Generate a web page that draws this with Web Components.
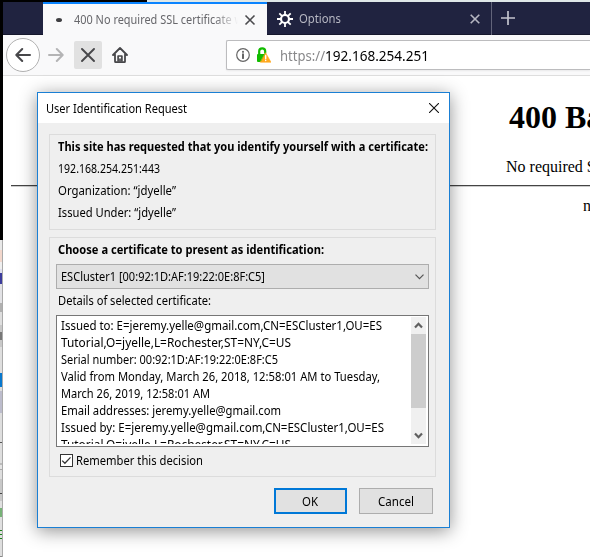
<!DOCTYPE html>
<html lang="en"><head><meta charset="utf-8"><title>400 No required SSL certificate was sent</title>
<style>
html,body{margin:0;width:590px;height:557px;overflow:hidden;background:#fff}
body{font:12px "Noto Sans","Open Sans",sans-serif;color:#000}
</style></head><body>
<desktop-view></desktop-view>
<script>
const def=(name,html,init)=>customElements.define(name,class extends HTMLElement{
  connectedCallback(){
    if(this.shadowRoot)return;
    const t=document.createElement('template');t.innerHTML=html;
    this.attachShadow({mode:'open'}).append(t.content.cloneNode(true));
    if(init)init(this,this.shadowRoot);
  }
});

// A single line of text condensed to the width given in its "w" attribute.
def('fit-text',`<style>:host{display:block;white-space:nowrap;height:17px;line-height:17px}
span{display:inline-block;transform-origin:0 50%}</style><span><slot></slot></span>`,(h,r)=>{
  const s=r.querySelector('span'),w=+h.getAttribute('w');
  h.style.width=w+'px';
  const n=s.getBoundingClientRect().width;
  if(n)s.style.transform='scaleX('+(w/n)+')';
});

def('tab-strip',`<style>
:host{display:flex;height:33px;background:#202340;box-sizing:border-box;color:#b6b7c2;border-bottom:1px solid #15172c}
.gap{width:40px;flex:none}
.tab{display:flex;align-items:center;height:33px;box-sizing:border-box}
.on{width:224px;background:#f9f9fa;border-top:2px solid #0a84ff;color:#67676b;padding-left:13px;height:34px;padding-bottom:1px}
.dot{width:6px;height:4px;border-radius:50%;background:#3f3f42;margin-right:12px}
.title{width:164px;overflow:hidden;-webkit-mask:linear-gradient(90deg,#000 140px,transparent 164px);mask:linear-gradient(90deg,#000 140px,transparent 164px)}
.off{width:225px;padding-left:10px;border-right:1px solid #62647a}
svg{display:block;flex:none}
</style>
<div class="gap"></div>
<div class="tab on"><div class="dot"></div><div class="title"><fit-text w="169">400 No required SSL certificate w</fit-text></div>
<svg width="12" height="12" viewBox="0 0 12 12" style="margin-left:6px"><path d="M1.5 1.5l9 9m0-9l-9 9" stroke="#4b4b4e" stroke-width="1.6"/></svg></div>
<div class="tab off"><svg width="16" height="16" viewBox="0 0 16 16" fill="none" stroke="#fff"><circle cx="8" cy="8" r="4" stroke-width="2.2"/><path d="M8 0v4M8 12v4M0 8h4M12 8h4M2.3 2.3l2.9 2.9M10.8 10.8l2.9 2.9M13.7 2.3l-2.9 2.9M5.2 10.8l-2.9 2.9" stroke-width="1.8"/></svg>
<fit-text w="42" style="margin-left:6px">Options</fit-text>
<svg width="10" height="10" viewBox="0 0 10 10" style="margin-left:129px"><path d="M.7.7l8.6 8.6m0-8.6L.7 9.3" stroke="#b6b7c2" stroke-width="1.6"/></svg></div>
<svg width="14" height="14" viewBox="0 0 14 14" style="margin:9px 0 0 9px"><path d="M7 0v14M0 7h14" stroke="#c3c4cd" stroke-width="1.7"/></svg>`);

def('nav-bar',`<style>
:host{display:flex;height:41px;box-sizing:border-box;background:#f9f9fa;border-bottom:1px solid #dedede;align-items:center;padding:0 0 1px 3px}
.back{width:34px;height:34px;box-sizing:border-box;border:1px solid #b1b1b1;border-radius:50%;background:#fff;display:grid;place-items:center;flex:none}
svg{display:block;fill:none;stroke-linecap:round;stroke-linejoin:round;flex:none}
.stop{width:28px;height:28px;background:#e1e1e1;border-radius:2px;display:grid;place-items:center;margin:0 10px;flex:none}
.url{display:flex;align-items:center;margin-left:98px;height:30px;box-sizing:border-box;border:1px solid #bcbcbe;border-right:0;border-radius:2px 0 0 2px;background:#fff;flex:1;padding-left:9px;font-size:15px;box-shadow:0 1px 2px #0001}
.url fit-text{position:relative;top:1px}
.s{color:#88888a}
</style>
<div class="back"><svg width="16" height="16" viewBox="0 0 16 16" stroke="#47474a" stroke-width="2"><path d="M15 8H1.5M7.2 2L1.3 8l5.9 6"/></svg></div>
<svg width="16" height="16" viewBox="0 0 16 16" stroke="#b4b4b5" stroke-width="2" style="margin-left:8px"><path d="M1 8h13.5M8.8 2l5.9 6-5.9 6"/></svg>
<div class="stop"><svg width="14" height="14" viewBox="0 0 14 14" stroke="#47474a" stroke-width="1.9"><path d="M1 1l12 12M13 1L1 13"/></svg></div>
<svg width="16" height="16" viewBox="0 0 16 16" stroke="#47474a" stroke-width="1.8"><path d="M1 8l7-7 7 7M3 7.5V14.5a.6.6 0 0 0 .6.6h8.8a.6.6 0 0 0 .6-.6V7.5"/><path d="M6.1 14V9h3.8v5M8 12v2" stroke-width="1.7"/></svg>
<div class="url"><svg width="14" height="14" viewBox="0 0 14 14" stroke="#666"><circle cx="7" cy="7" r="6.3" stroke-width="1.2"/><path d="M7 6.2v4M7 3.7v.2" stroke="#555" stroke-width="1.8"/></svg>
<svg width="15" height="16" viewBox="0 0 15 16" style="margin-left:6px"><path d="M3.2 8V4.3a3 3 0 0 1 6 0V6" stroke="#12bc00" stroke-width="2.2"/><rect x="1" y="7" width="9" height="8" rx="1" fill="#12bc00"/><path d="M9.7 6L15 15.2H4.5z" fill="#ffa91e" stroke="#ffa91e" stroke-width=".6"/><path d="M9.7 8.5v3M9.7 13.3v.2" stroke="#fff" stroke-width="1.4"/></svg>
<fit-text class="s" w="45" style="margin-left:9px">https://</fit-text><fit-text w="104">192.168.254.251</fit-text></div>`);

def('error-page',`<style>
:host{display:block;flex:1;overflow:hidden;background:#fff;font:16px "Liberation Serif",serif;padding-left:8px}
h1{font-size:32px;line-height:37px;margin:23px 0 0 498px;white-space:nowrap}
p{margin:22px 0 0 495px;line-height:18px;white-space:nowrap}
hr{border:0;border-top:1px solid #444;border-bottom:1px solid #ccc;margin:9px 0 0}
p.n{margin:10px 0 0 572px}
</style><h1>400 Bad Request</h1><p>No required SSL certificate was sent</p><hr><p class="n">nginx</p>`);

// Slice of the window lying behind the browser's left edge.
def('back-sliver',`<style>:host{display:flex;flex-direction:column;width:3px;height:557px;flex:none;overflow:hidden;box-sizing:border-box;border-right:1px solid #aaa}
i{display:block;flex:none}</style>
<slot></slot>`,(h,r)=>{
  [[240,'#000'],[10,'#e8e8e8'],[12,'#f2d7cc'],[7,'#efefef'],[4,'#e0e0ef'],[11,'#3c3c9c'],[19,'#e2e2e5'],[9,'#b0b0b0'],[13,'#dedede'],[7,'#c8c8c8'],[8,'#777'],[7,'#c8c8c8'],[26,'#dedede'],[14,'#0878ce'],[4,'#ddd'],[22,'#bcbccc'],[29,'#dedede'],[1,'#555'],[20,'#dedede'],[2,'#bbb'],[4,'#e4e4e4'],[1,'#aaa'],[9,'#dedede'],[14,'#c8c8c8'],[1,'#444'],[7,'#c8c8c8'],[7,'#e0e0e0'],[9,'#77b277'],[13,'#e0e0e0'],[1,'#188018'],[3,'#e0e0e0'],[1,'#188018'],[3,'#e0e0e0'],[1,'#188018'],[17,'#dedede'],[10,'#888']]
  .forEach(([y,c])=>{const i=document.createElement('i');i.style.cssText='height:'+y+'px;background:'+c;r.append(i)});
  h.style.borderImage='linear-gradient(#000 240px,#aaa 240px) 1';
});

def('group-box',`<style>:host{display:block;box-sizing:border-box;border:1px solid #dcdcdc;margin:0 13px 0 11px}</style><slot></slot>`);

def('push-button',`<style>:host{display:grid;place-items:center;box-sizing:border-box;width:74px;height:26px;background:#e1e1e1;border:1px solid #adadad}
:host([default]){width:73px;border:2px solid #0078d7;padding-right:1px}</style><slot></slot>`);

def('scroll-bar',`<style>:host{display:flex;flex-direction:column;width:15px;height:127px;background:#f0f0f0;flex:none}
.b{height:17px;display:grid;place-items:center}.t{height:74px;background:#cdcdcd}.f{flex:1}svg{display:block}</style>
<div class="b"><svg width="9" height="7" viewBox="0 0 9 7"><path d="M1 5.5l3.5-3.7L8 5.5" fill="none" stroke="#606060" stroke-width="2.2"/></svg></div>
<div class="t"></div><div class="f"></div>
<div class="b"><svg width="9" height="7" viewBox="0 0 9 7"><path d="M1 1.5l3.5 3.7L8 1.5" fill="none" stroke="#606060" stroke-width="2.2"/></svg></div>`);

def('cert-dialog',`<style>
:host{display:block;box-sizing:border-box;width:413px;height:436px;border:1px solid #1a7fd4;background:#efefef;box-shadow:0 3px 17px rgba(0,0,0,.43)}
header{display:flex;justify-content:space-between;align-items:center;height:30px;background:#fff;padding:0 10px 0 8px}
svg{display:block}
b{font-weight:700}
.g1{height:96px;margin-top:11px;padding:3px 0 0 8px}
.g1 fit-text{margin-bottom:5px}
.g2{height:240px;margin-top:7px;padding:3px 6px 0}
.sel{display:flex;align-items:center;justify-content:space-between;height:25px;box-sizing:border-box;border:1px solid #adadad;background:#e1e1e1;margin:6px 0 3px;padding:0 4px}
.area{display:flex;justify-content:space-between;height:132px;box-sizing:border-box;border:1px solid #767676;background:#fff;margin-top:6px;padding:1px 2px 2px 4px}
.lines{height:127px;overflow:hidden}
.chk{display:flex;align-items:center;margin:5px 0 0 4px;gap:3px}
.box{width:13px;height:13px;box-sizing:border-box;border:1px solid #333;background:#fff}
footer{display:flex;justify-content:flex-end;gap:12px;padding:11px 16px 0 0}
</style>
<header><fit-text w="141">User Identification Request</fit-text><svg width="10" height="10" viewBox="0 0 10 10"><path d="M0 0l10 10M10 0L0 10" stroke="#111" stroke-width="1.1"/></svg></header>
<group-box class="g1"><fit-text w="370"><b>This site has requested that you identify yourself with a certificate:</b></fit-text>
<fit-text w="102">192.168.254.251:443</fit-text><fit-text w="118">Organization: “jdyelle”</fit-text><fit-text w="118">Issued Under: “jdyelle”</fit-text></group-box>
<group-box class="g2"><fit-text w="266" style="margin-left:2px"><b>Choose a certificate to present as identification:</b></fit-text>
<div class="sel"><fit-text w="204">ESCluster1 [00:92:1D:AF:19:22:0E:8F:C5]</fit-text><svg width="9" height="6" viewBox="0 0 9 6"><path d="M.5.7l4 4 4-4" fill="none" stroke="#555" stroke-width="1.2"/></svg></div>
<fit-text w="153" style="margin-left:2px">Details of selected certificate:</fit-text>
<div class="area"><div class="lines">
<fit-text w="321">Issued to: E=jeremy.yelle@gmail.com,CN=ESCluster1,OU=ES</fit-text>
<fit-text w="230">Tutorial,O=jyelle,L=Rochester,ST=NY,C=US</fit-text>
<fit-text w="217">Serial number: 00:92:1D:AF:19:22:0E:8F:C5</fit-text>
<fit-text w="319">Valid from Monday, March 26, 2018, 12:58:01 AM to Tuesday,</fit-text>
<fit-text w="149">March 26, 2019, 12:58:01 AM</fit-text>
<fit-text w="220">Email addresses: jeremy.yelle@gmail.com</fit-text>
<fit-text w="323">Issued by: E=jeremy.yelle@gmail.com,CN=ESCluster1,OU=ES</fit-text>
<fit-text w="230">Tutorial,O=jyelle,L=Rochester,ST=NY,C=US</fit-text>
</div><scroll-bar></scroll-bar></div>
<div class="chk"><div class="box"><svg width="11" height="11" viewBox="0 0 11 11"><path d="M1.2 5.6l2.7 2.7 5.6-5.9" fill="none" stroke="#333" stroke-width="1.3"/></svg></div><fit-text w="127">Remember this decision</fit-text></div></group-box>
<footer><push-button default><fit-text w="16">OK</fit-text></push-button><push-button><fit-text w="36">Cancel</fit-text></push-button></footer>`);

def('desktop-view',`<style>
:host{display:flex;position:relative;width:590px;height:557px;overflow:hidden}
.win{flex:1;display:flex;flex-direction:column;min-width:0}
.edge{height:2px;flex:none;background:linear-gradient(90deg,#000 144px,#dfe8e8 144px)}
tab-strip,nav-bar{flex:none}
cert-dialog{position:absolute;left:37px;top:92px}
</style><back-sliver></back-sliver><div class="win"><div class="edge"></div><tab-strip></tab-strip><nav-bar></nav-bar><error-page></error-page></div><cert-dialog></cert-dialog>`);
</script></body></html>
